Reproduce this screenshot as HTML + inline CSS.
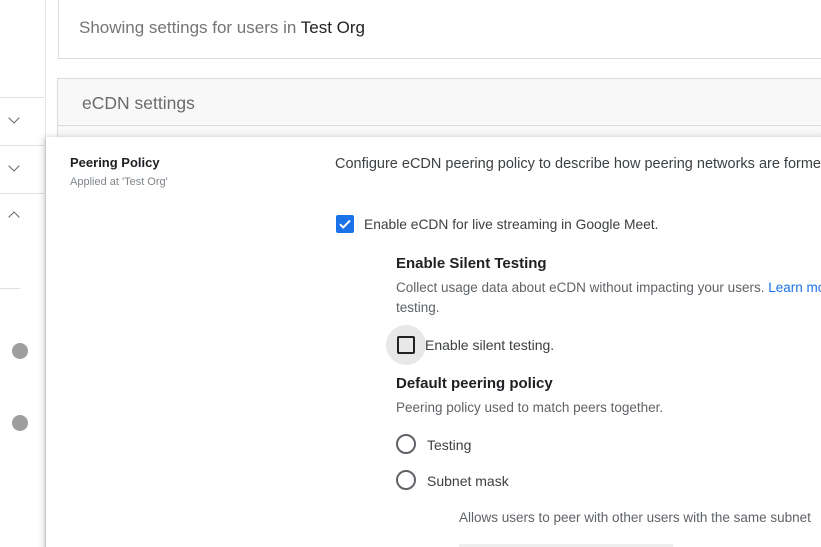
<!DOCTYPE html>
<html><head><style>
*{margin:0;padding:0;box-sizing:border-box}
html,body{width:821px;height:547px;overflow:hidden}
body{background:#fff;font-family:"Liberation Sans",Arial,sans-serif;position:relative;color:#202124}
.abs{position:absolute}
.hl{position:absolute;height:1px;background:#e0e0e0}
.chev{position:absolute;width:8px;height:8px;border-right:1.8px solid #5f6368;border-bottom:1.8px solid #5f6368}
.dot{position:absolute;width:16px;height:16px;border-radius:50%;background:#9e9e9e;left:12px}
.radio{position:absolute;width:20px;height:20px;border:2px solid #5f6368;border-radius:50%}
.t{position:absolute;white-space:nowrap}
</style></head><body>
<div class="abs" style="left:45px;top:0;width:1px;height:547px;background:#e6e6e6"></div>
<div class="hl" style="left:0;top:97px;width:44px"></div>
<div class="hl" style="left:0;top:145px;width:44px"></div>
<div class="hl" style="left:0;top:193px;width:44px"></div>
<div class="hl" style="left:0;top:288px;width:20px"></div>
<div class="chev" style="left:10px;top:114px;transform:rotate(45deg)"></div>
<div class="chev" style="left:10px;top:162px;transform:rotate(45deg)"></div>
<div class="chev" style="left:10px;top:213px;transform:rotate(-135deg)"></div>
<div class="dot" style="top:343px"></div>
<div class="dot" style="top:415px"></div>

<div class="abs" style="left:58px;top:-2px;width:770px;height:61px;border:1px solid #dadce0;background:#fff"></div>
<div class="t" style="left:79px;top:18px;font-size:17px;color:#757575">Showing settings for users in <span style="color:#202124">Test Org</span></div>

<div class="abs" style="left:57px;top:78px;width:770px;height:60px;border:1px solid #dadce0;background:#f8f8f8"></div>
<div class="abs" style="left:57px;top:125px;width:770px;height:1px;background:#dadce0"></div>
<div class="t" style="left:82px;top:93px;font-size:17.5px;color:#6b6b6b">eCDN settings</div>

<div class="abs" style="left:46px;top:137px;width:780px;height:420px;background:#fff;box-shadow:-2px 0 6px rgba(0,0,0,.2)"></div>
<div class="t" style="left:70px;top:155px;font-size:13px;font-weight:bold;color:#202124">Peering Policy</div>
<div class="t" style="left:70px;top:176px;font-size:11px;color:#80868b">Applied at 'Test Org'</div>
<div class="t" style="left:335px;top:156px;font-size:14.5px;color:#3c4043">Configure eCDN peering policy to describe how peering networks are formed.</div>

<div class="abs" style="left:336px;top:215px;width:18px;height:18px;background:#1a73e8;border-radius:2px"></div>
<svg class="abs" style="left:336px;top:215px" width="18" height="18"><path d="M4 9.2l3.2 3.2L14 5.6" stroke="#fff" stroke-width="2" fill="none"/></svg>
<div class="t" style="left:364px;top:217px;font-size:13.8px;color:#3c4043">Enable eCDN for live streaming in Google Meet.</div>

<div class="t" style="left:396px;top:255px;font-size:15px;font-weight:bold;color:#202124">Enable Silent Testing</div>
<div class="t" style="left:396px;top:280px;font-size:13.5px;color:#5f6368">Collect usage data about eCDN without impacting your users. <span style="color:#1a73e8">Learn more</span></div>
<div class="t" style="left:396px;top:300px;font-size:13.5px;color:#5f6368">testing.</div>
<div class="abs" style="left:386px;top:325px;width:40px;height:40px;border-radius:50%;background:#e8e8e8"></div>
<div class="abs" style="left:397px;top:336px;width:18px;height:18px;border:2px solid #202124;border-radius:2px"></div>
<div class="t" style="left:425px;top:337px;font-size:14px;color:#3c4043">Enable silent testing.</div>

<div class="t" style="left:396px;top:375px;font-size:15px;font-weight:bold;color:#202124">Default peering policy</div>
<div class="t" style="left:396px;top:400px;font-size:13.5px;color:#5f6368">Peering policy used to match peers together.</div>
<div class="radio" style="left:396px;top:434px"></div>
<div class="t" style="left:427px;top:437px;font-size:14px;color:#3c4043">Testing</div>
<div class="radio" style="left:396px;top:470px"></div>
<div class="t" style="left:427px;top:473px;font-size:14px;color:#3c4043">Subnet mask</div>
<div class="t" style="left:459px;top:510px;font-size:13.5px;color:#5f6368">Allows users to peer with other users with the same subnet</div>
<div class="abs" style="left:459px;top:544px;width:214px;height:3px;background:#eee"></div>
</body></html>
